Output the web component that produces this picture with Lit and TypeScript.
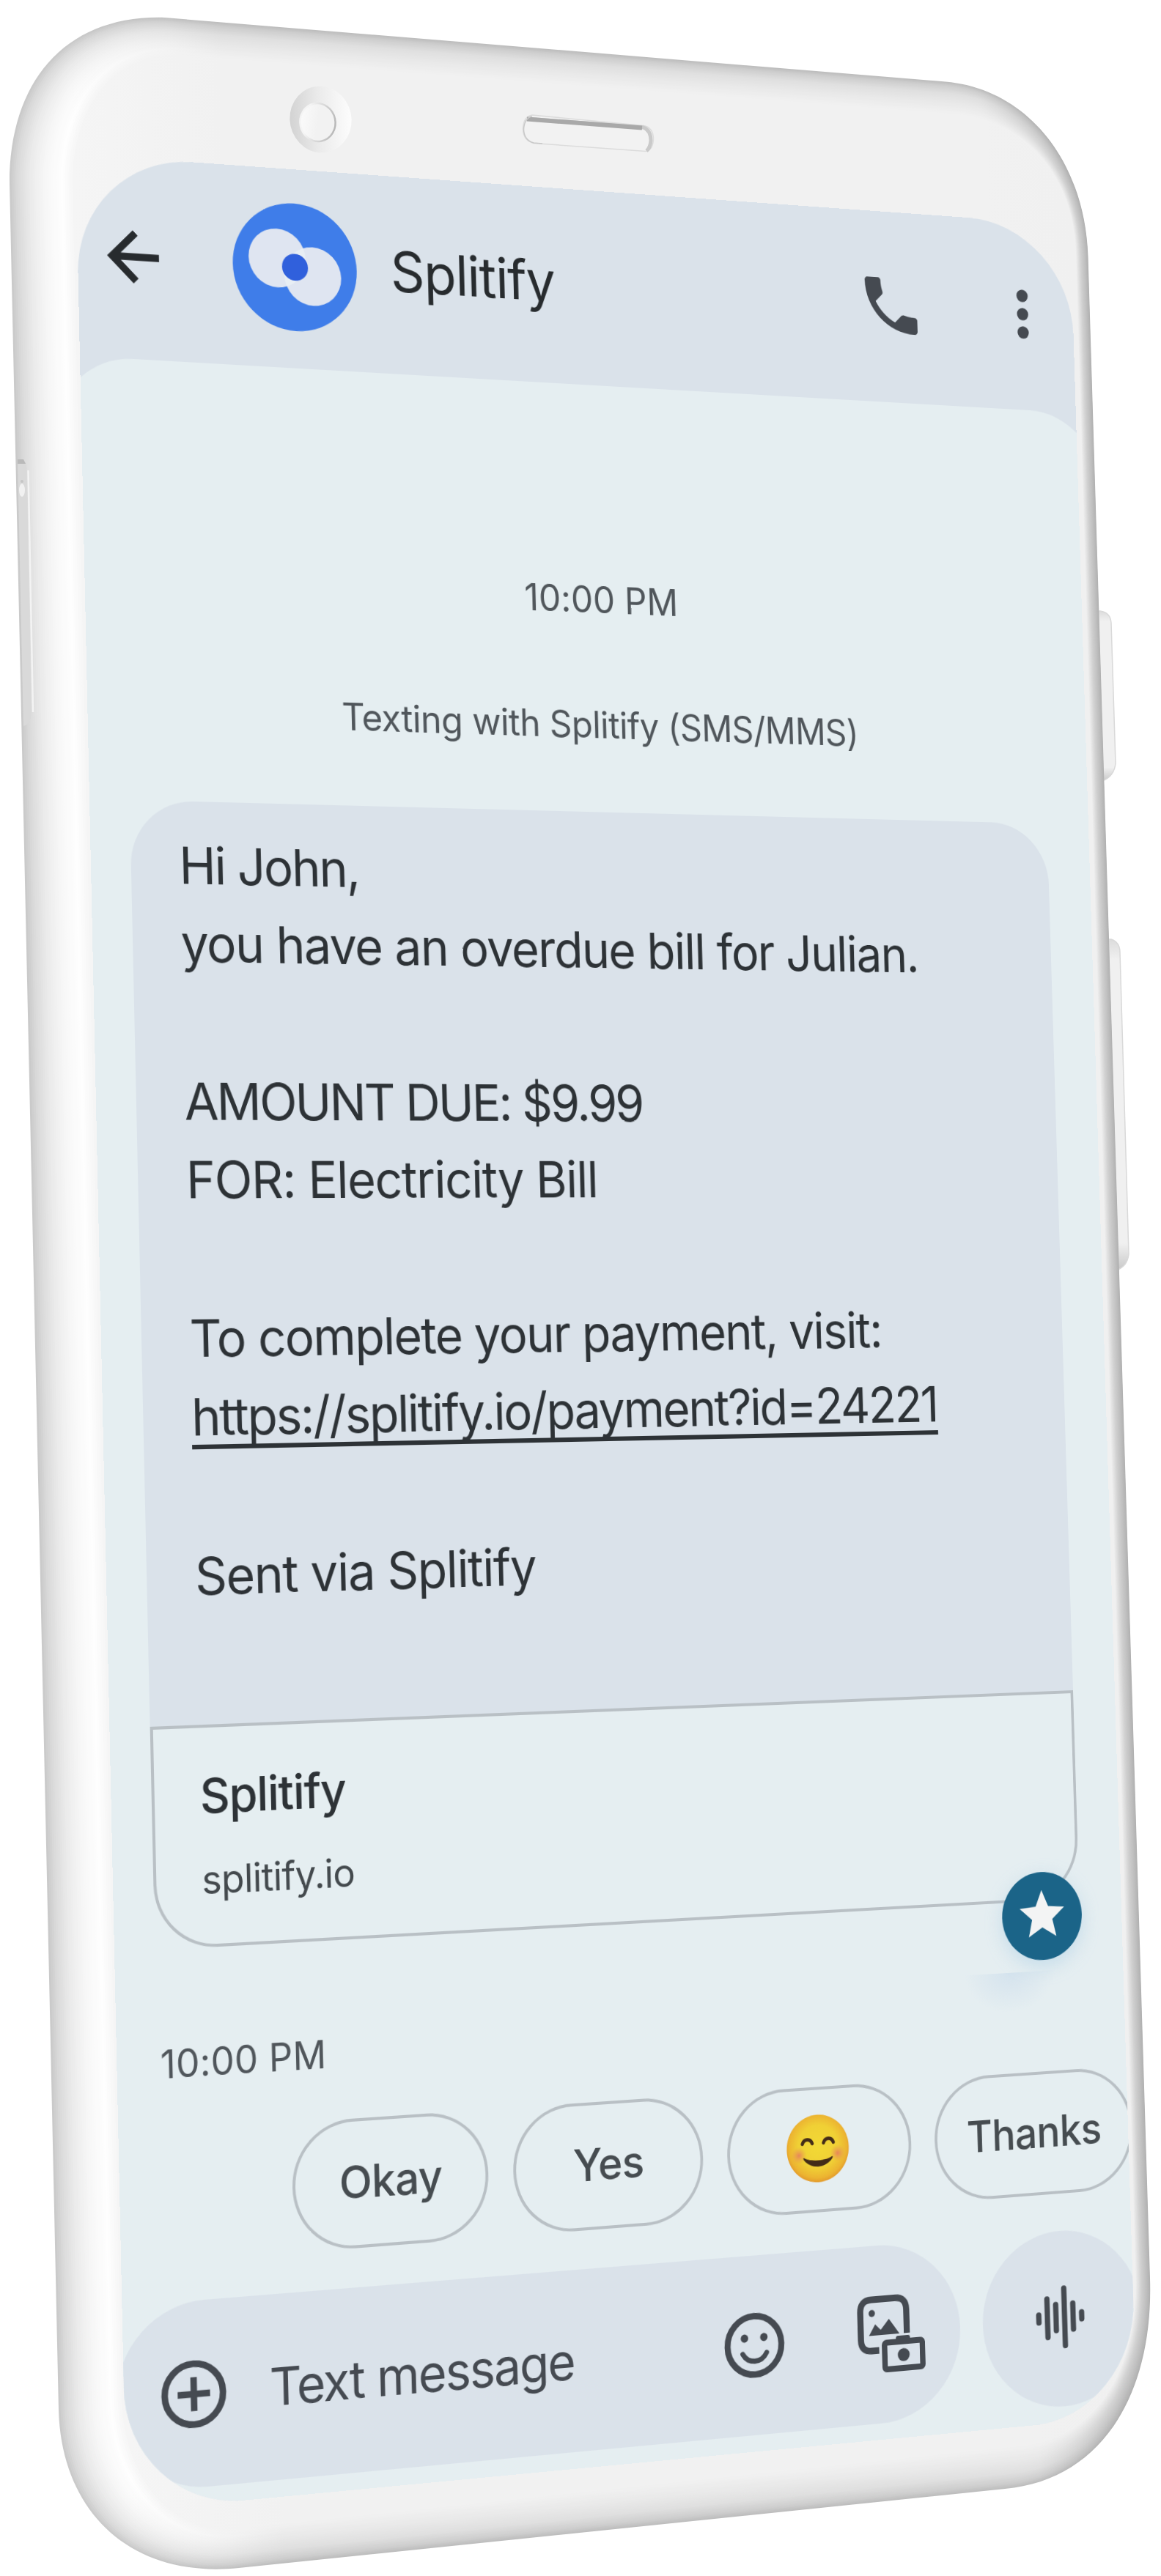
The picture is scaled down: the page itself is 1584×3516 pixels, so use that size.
import { LitElement, html, svg, css } from "lit";
import { customElement, property } from "lit/decorators.js";

type Point = [number, number];

/** Size of the flat, untilted phone screen. */
const SCREEN_W = 1440;
const SCREEN_H = 3068;

/** Where the four corners of the screen land once the phone is tilted. */
const SCREEN_CORNERS: [Point, Point, Point, Point] = [
  [103, 210],
  [1460, 307],
  [1551, 3297],
  [172.5, 3428],
];

/** Projective transform that maps a w x h rectangle onto a quadrilateral (TL, TR, BR, BL). */
function quadMatrix(w: number, h: number, [p0, p1, p2, p3]: [Point, Point, Point, Point]): string {
  const dx1 = p1[0] - p2[0];
  const dx2 = p3[0] - p2[0];
  const dx3 = p0[0] - p1[0] + p2[0] - p3[0];
  const dy1 = p1[1] - p2[1];
  const dy2 = p3[1] - p2[1];
  const dy3 = p0[1] - p1[1] + p2[1] - p3[1];
  const det = dx1 * dy2 - dx2 * dy1;
  const g = (dx3 * dy2 - dx2 * dy3) / det;
  const k = (dx1 * dy3 - dx3 * dy1) / det;
  const a = p1[0] - p0[0] + g * p1[0];
  const b = p3[0] - p0[0] + k * p3[0];
  const d = p1[1] - p0[1] + g * p1[1];
  const e = p3[1] - p0[1] + k * p3[1];
  const m = [a / w, d / w, 0, g / w, b / h, e / h, 0, k / h, 0, 0, 1, 0, p0[0], p0[1], 0, 1];
  return `matrix3d(${m.map((n) => n.toFixed(10)).join(",")})`;
}

/* ---- Phone body: rings interpolated between the silhouette and the front face ---- */

const OUTER = [
  13, 250, 13, 110, 90, 20, 225, 24, 1290, 111.5, 1400, 121, 1480, 218, 1484.5, 350, 1569, 3110,
  1574, 3268, 1503, 3385, 1371, 3397, 326, 3505, 180, 3520, 84, 3430, 80, 3290,
];
const INNER = [
  99, 250, 99, 150, 150, 72, 245, 75, 1300, 155, 1400, 163, 1465, 240, 1468, 345, 1549.5, 3110,
  1552, 3230, 1500, 3325, 1400, 3338, 320, 3452, 225, 3460, 166, 3370, 166, 3270,
];

function bodyPath(t: number): string {
  const p = OUTER.map((v, i) => (v + (INNER[i] - v) * t).toFixed(1));
  const c = (i: number) => `C${p.slice(i, i + 6).join(" ")}`;
  return `M${p[0]} ${p[1]}${c(2)}L${p[8]} ${p[9]}${c(10)}L${p[16]} ${p[17]}${c(18)}L${p[24]} ${p[25]}${c(26)}Z`;
}

type Ramp = [number, number][];
const LEFT_RAMP: Ramp = [[0, 202], [0.1, 217], [0.3, 234], [0.55, 247], [0.82, 254], [1, 245]];
const MID_RAMP: Ramp = [[0, 190], [0.12, 206], [0.35, 223], [0.7, 234], [1, 241]];
const RIGHT_RAMP: Ramp = [[0, 176], [0.2, 188], [0.6, 208], [0.9, 231], [1, 240]];

function grey(ramp: Ramp, t: number): string {
  let i = 1;
  while (i < ramp.length - 1 && ramp[i][0] < t) i++;
  const [t0, v0] = ramp[i - 1];
  const [t1, v1] = ramp[i];
  const v = Math.round(v0 + ((v1 - v0) * (t - t0)) / (t1 - t0));
  return `rgb(${v},${v},${v})`;
}

const RINGS = Array.from({ length: 33 }, (_, i) => i / 32);

@customElement("phone-body")
class PhoneBody extends LitElement {
  static styles = css`
    :host {
      display: block;
      width: 1584px;
      height: 3516px;
    }
    .body {
      display: block;
    }
  `;

  render() {
    return html`
      <svg class="body" width="1584" height="3516" viewBox="0 0 1584 3516">
        <defs>
          ${RINGS.map(
            (t, i) => svg`
              <linearGradient id="ring${i}" gradientUnits="userSpaceOnUse" x1="18" y1="500" x2="1494" y2="463">
                <stop offset="0" stop-color=${grey(LEFT_RAMP, t)} />
                <stop offset=".06" stop-color=${grey(LEFT_RAMP, t)} />
                <stop offset=".2" stop-color=${grey(MID_RAMP, t)} />
                <stop offset=".9" stop-color=${grey(MID_RAMP, t)} />
                <stop offset=".98" stop-color=${grey(RIGHT_RAMP, t)} />
              </linearGradient>`
          )}
          <linearGradient id="lensRim" x1="0" y1=".4" x2="1" y2=".6">
            <stop offset="0" stop-color="#d2d2d2" />
            <stop offset=".45" stop-color="#eaeaea" />
            <stop offset="1" stop-color="#fdfdfd" />
          </linearGradient>
          <linearGradient id="lens" x1="0" y1=".3" x2="1" y2=".7">
            <stop offset="0" stop-color="#fbfbfb" />
            <stop offset=".5" stop-color="#f2f2f2" />
          </linearGradient>
          <linearGradient id="lensEdge" x1="0" y1=".3" x2="1" y2=".8">
            <stop offset=".2" stop-color="#f4f4f4" />
            <stop offset="1" stop-color="#b2b2b2" />
          </linearGradient>
          <linearGradient id="key" x1="0" y1="0" x2="0" y2="1">
            <stop offset="0" stop-color="#dcdcdc" />
            <stop offset=".06" stop-color="#f0f0f0" />
            <stop offset=".92" stop-color="#f0f0f0" />
            <stop offset="1" stop-color="#c9c9c9" />
          </linearGradient>
        </defs>

        <g fill="url(#key)" stroke="#d9d9d9" stroke-width="1.5">
          <path d="M1490 834H1501Q1515 836 1516 850L1522 1042Q1520 1060 1504 1066H1490Z" />
          <path d="M1500 1282H1516Q1528 1286 1528 1300L1540 1712Q1538 1728 1525 1733H1500Z" />
        </g>

        ${RINGS.map((t, i) => svg`<path d=${bodyPath(t)} fill="url(#ring${i})" />`)}

        <path d="M24 628H31Q36 629 36.500 640L43 970Q43 982 37 989L32 991Z" fill="#d9d9d9" />
        <path d="M38.500 642L45 972" stroke="#f3f3f3" stroke-width="2.500" fill="none" />
        <path d="M24 627H32L35 633H24Z" fill="#b9b9b9" />
        <ellipse cx="30" cy="657" rx="2" ry="2" fill="#c6c6c6" />
        <ellipse cx="30" cy="669" rx="4" ry="9" fill="#f1f1f1" />

        <ellipse cx="437.500" cy="163" rx="42" ry="45.500" transform="rotate(-12 437.500 163)" fill="url(#lensRim)" />
        <ellipse cx="433.500" cy="167" rx="24" ry="26" transform="rotate(-12 433.500 167)" fill="url(#lens)" stroke="url(#lensEdge)" stroke-width="2.500" />

        <path d="M726 157L878 171.500Q891 174 891.500 189Q891 205 881 206.500L728 195.500Q714 192 713.500 176Q714 159 726 157Z" fill="#f2f2f2" stroke="#dcdcdc" stroke-width="1.500" />
        <path d="M719 162L878 174Q888 178 888 192Q887 202 882 206" fill="none" stroke="#cacaca" stroke-width="5" />
        <path d="M719 162.500L876 174.500" fill="none" stroke="#a9a9a9" stroke-width="6" />
        <path d="M726 158.500Q715 162 714.500 177Q715 191 728 195L740 196" fill="none" stroke="#c9c9c9" stroke-width="1.500" />
      </svg>
    `;
  }
}

/* ---- Icons ---- */

@customElement("chat-icon")
class ChatIcon extends LitElement {
  static styles = css`
    :host {
      display: block;
      flex: none;
      width: 104px;
      height: 104px;
    }
    .glyph {
      display: block;
      width: 100%;
      height: 100%;
      fill: currentColor;
      overflow: visible;
    }
  `;

  @property() name = "";

  private shape() {
    switch (this.name) {
      case "back":
        return svg`<path d="M20 11H7.830l5.590-5.590L12 4l-8 8 8 8 1.410-1.410L7.830 13H20z" stroke="currentColor" stroke-width=".2" />`;
      case "call":
        return svg`<path d="M6.620 10.790c1.440 2.830 3.760 5.140 6.590 6.590l2.200-2.200c.27-.27.67-.36 1.020-.24 1.120.37 2.330.57 3.570.57.55 0 1 .45 1 1V20c0 .55-.45 1-1 1-9.390 0-17-7.610-17-17 0-.55.45-1 1-1h3.500c.55 0 1 .45 1 1 0 1.250.2 2.450.57 3.570.11.35.03.74-.25 1.020l-2.200 2.200z" />`;
      case "more":
        return svg`<circle cx="12" cy="6" r="2" /><circle cx="12" cy="12" r="2" /><circle cx="12" cy="18" r="2" />`;
      case "add":
        return svg`<g fill="none" stroke="currentColor" stroke-width="2"><circle cx="12" cy="12" r="9" /><path d="M12 7V17M7 12H17" /></g>`;
      case "emoji":
        return svg`
          <g fill="none" stroke="currentColor">
            <circle cx="12" cy="12" r="9" stroke-width="2" />
            <path d="M8 14.500C8.900 16.100 10.300 16.900 12 16.900S15.100 16.100 16 14.500" stroke-width="1.600" stroke-linecap="round" />
          </g>
          <circle cx="8.700" cy="9.700" r="1.250" /><circle cx="15.200" cy="9.700" r="1.250" />`;
    }
    return svg``;
  }

  render() {
    return html`<svg class="glyph" viewBox="0 0 24 24">${this.shape()}</svg>`;
  }
}

const mediaIcon = html`
  <svg class="media" viewBox="0 0 99 104" fill="none" stroke="currentColor">
    <path d="M72.500 53V21Q72.500 4.500 56 4.500H21Q4.500 4.500 4.500 21V58Q4.500 73.500 20 73.500H31" stroke-width="9" />
    <path d="M16.500 53L26 38L34 46L46.500 32L61.500 53Z" fill="currentColor" stroke="none" />
    <circle cx="21.500" cy="23" r="4.700" fill="currentColor" stroke="none" />
    <rect x="39" y="64" width="56" height="36" rx="3" stroke-width="8" />
    <path d="M56 64V59.500Q56 56 59 56H74Q77 56 77 59.500V64Z" fill="currentColor" stroke="none" />
    <circle cx="67" cy="82" r="8.800" fill="currentColor" stroke="none" />
  </svg>
`;

const WAVE = [18, 60, 43, 86, 43, 17];
const waveIcon = html`
  <svg class="wave" viewBox="0 0 74 88" fill="currentColor">
    ${WAVE.map((h, i) => svg`<rect x=${0.5 + i * 13} y=${44 - h / 2} width="8" height=${h} rx="4" />`)}
  </svg>
`;

const avatar = html`
  <svg class="avatar" viewBox="-87 -87 174 174">
    <clipPath id="leftDisc"><circle cx="-24.500" cy="-11" r="39.500" /></clipPath>
    <circle r="86" fill="#3f7de9" />
    <circle cx="-24.500" cy="-11" r="39.500" fill="#dfe5f1" />
    <circle cx="24.500" cy="11" r="39.500" fill="#dfe5f1" />
    <circle cx="24.500" cy="11" r="39.500" fill="#e8eef4" clip-path="url(#leftDisc)" />
    <circle r="18" fill="#3060dc" />
  </svg>
`;

const smile = html`
  <svg class="smile" viewBox="-46 -46 92 92">
    <defs>
      <radialGradient id="face" cx=".5" cy=".47" r=".53">
        <stop offset="0" stop-color="#f2d935" />
        <stop offset=".6" stop-color="#f0d035" />
        <stop offset=".88" stop-color="#ecb431" />
        <stop offset="1" stop-color="#e39a2c" />
      </radialGradient>
      <radialGradient id="cheek">
        <stop offset="0" stop-color="#e8855b" />
        <stop offset="1" stop-color="#e8a04a" stop-opacity="0" />
      </radialGradient>
    </defs>
    <circle r="45.500" fill="url(#face)" />
    <circle cx="-28" cy="8" r="11.500" fill="url(#cheek)" />
    <circle cx="29" cy="8" r="11.500" fill="url(#cheek)" />
    <g fill="none" stroke="#432c18" stroke-width="4.600" stroke-linecap="round">
      <path d="M-22.500 -7C-20 -14.500 -10.500 -14.500 -8 -7" />
      <path d="M8.500 -7C11 -14.500 20.500 -14.500 23 -7" />
    </g>
    <path d="M-21 11.500C-12 17.500 12 17.500 21 11.500C24 13 14 24.500 0 24.500S-24 13 -21 11.500Z" fill="#432c18" />
  </svg>
`;

/* ---- Conversation ---- */

interface Line {
  text: string;
  /** Letter spacing of the line, in pixels. */
  tracking?: number;
  link?: boolean;
}

const MESSAGE: Line[] = [
  { text: "Hi John,", tracking: -2.1 },
  { text: "you have an overdue bill for Julian.", tracking: -1.52 },
  { text: "" },
  { text: "AMOUNT DUE: $9.99", tracking: -2.7 },
  { text: "FOR: Electricity Bill", tracking: -1.35 },
  { text: "" },
  { text: "To complete your payment, visit:", tracking: -1.7 },
  { text: "https://splitify.io/payment?id=24221", tracking: -2.22, link: true },
  { text: "" },
  { text: "Sent via Splitify", tracking: -1.3 },
];

@customElement("chat-screen")
class ChatScreen extends LitElement {
  static styles = css`
    :host {
      display: flex;
      flex-direction: column;
      width: 1440px;
      height: 3068px;
      overflow: hidden;
      border-radius: 158px;
      background: #dae2ea;
      color: #2d3236;
      font-family: Inter, Roboto, "Liberation Sans", sans-serif;
    }
    .header {
      flex: none;
      display: flex;
      align-items: center;
      box-sizing: border-box;
      height: 268px;
      padding: 0 26px 5px 23px;
      color: #454a51;
    }
    .back {
      color: #272b2e;
    }
    .avatar {
      flex: none;
      width: 174px;
      height: 174px;
      margin-left: 82.500px;
    }
    .name {
      flex: 1;
      margin-left: 47px;
      padding-bottom: 5px;
      font-size: 75px;
      line-height: 90px;
      letter-spacing: -1.2px;
      color: #272b2e;
    }
    .more {
      margin-left: 97px;
    }
    .sheet {
      flex: 1;
      display: flex;
      flex-direction: column;
      margin: 0 -33px;
      padding: 264px 33px 0;
      border-radius: 105px 105px 0 0;
      background: #e5eef1;
    }
    .note {
      font-size: 50px;
      line-height: 60px;
      letter-spacing: -0.55px;
      text-align: center;
      color: #50565b;
    }
    .time {
      font-size: 50.5px;
      letter-spacing: -0.1px;
    }
    .status {
      margin-top: 111px;
    }
    .card {
      position: relative;
      width: 1322px;
      margin: 88.500px 0 0 54px;
    }
    .bubble {
      box-sizing: border-box;
      height: 1211px;
      padding: 33px 64px 0 65px;
      border-radius: 86px 86px 0 0;
      background: #dae2ea;
      font-size: 67.5px;
      line-height: 103.7px;
      white-space: nowrap;
    }
    .line {
      height: 103.7px;
    }
    .link {
      text-decoration: underline;
      text-decoration-thickness: 5.5px;
      text-underline-offset: 11.5px;
      text-decoration-skip-ink: none;
    }
    .preview {
      display: flex;
      flex-direction: column;
      gap: 41px;
      box-sizing: border-box;
      height: 289px;
      padding: 50px 61px 0;
      border: 4px solid #b9c0c5;
      border-radius: 0 0 84px 84px;
    }
    .site {
      font-size: 62.5px;
      font-weight: 500;
      line-height: 76px;
      letter-spacing: -1.1px;
    }
    .domain {
      font-size: 51px;
      line-height: 62px;
      letter-spacing: -0.6px;
      color: #43494d;
    }
    .badge {
      position: absolute;
      right: -3px;
      bottom: -81px;
      display: grid;
      place-items: center;
      width: 121px;
      height: 121px;
      border-radius: 50%;
      background: #1b6488;
      box-shadow: 0 8px 26px rgba(150, 195, 225, 0.4);
    }
    .star {
      width: 81px;
      height: 81px;
      margin-top: -3px;
      fill: #f3f4f4;
    }
    .glow {
      position: absolute;
      right: 40px;
      bottom: -150px;
      width: 138px;
      height: 54px;
      background: radial-gradient(ellipse 50% 100% at 50% 0, rgba(196, 216, 234, 0.5), rgba(214, 228, 242, 0));
    }
    .sent {
      margin: 118px 0 0 58px;
      letter-spacing: 0.2px;
      text-align: left;
    }
    .replies {
      display: flex;
      gap: 35.500px;
      margin: 56px 0 0 232px;
    }
    .chip {
      flex: none;
      display: grid;
      place-items: center;
      box-sizing: border-box;
      width: 269.500px;
      height: 169px;
      padding-bottom: 3px;
      border: 4.2px solid #b9c0c5;
      border-radius: 84px;
      font-size: 59px;
      font-weight: 500;
      letter-spacing: -0.7px;
      color: #464c50;
    }
    .wide {
      width: 300px;
    }
    .smile {
      width: 92px;
      height: 92px;
      margin-right: 5px;
    }
    .composer {
      display: flex;
      gap: 34px;
      margin: 51.500px 0 0 -10px;
      color: #454a51;
    }
    .field {
      flex: none;
      display: flex;
      align-items: center;
      box-sizing: border-box;
      width: 1187px;
      height: 240px;
      padding: 0 53.500px 0 51px;
      border-radius: 120px;
      background: #dae2ea;
    }
    .placeholder {
      flex: 1;
      margin-left: 50px;
      font-size: 67.5px;
      line-height: 80px;
      letter-spacing: -1.9px;
    }
    .media {
      width: 99px;
      height: 104px;
      margin-left: 99px;
    }
    .voice {
      flex: none;
      display: grid;
      place-items: center;
      width: 240px;
      height: 240px;
      border-radius: 50%;
      background: #dae2ea;
    }
    .wave {
      width: 74px;
      height: 88px;
      margin: 0 7px 4px 0;
    }
  `;

  private line(l: Line) {
    const text = l.link ? html`<span class="link">${l.text}</span>` : l.text;
    return html`<div class="line" style="letter-spacing: ${l.tracking ?? 0}px">${text}</div>`;
  }

  render() {
    return html`
      <div class="header">
        <chat-icon class="back" name="back"></chat-icon>
        ${avatar}
        <div class="name">Splitify</div>
        <chat-icon name="call"></chat-icon>
        <chat-icon class="more" name="more"></chat-icon>
      </div>
      <div class="sheet">
        <div class="note time">10:00 PM</div>
        <div class="note status">Texting with Splitify (SMS/MMS)</div>
        <div class="card">
          <div class="bubble">${MESSAGE.map((l) => this.line(l))}</div>
          <div class="preview">
            <div class="site">Splitify</div>
            <div class="domain">splitify.io</div>
          </div>
          <div class="glow"></div>
          <div class="badge">
            <svg class="star" viewBox="0 0 24 24">
              <path d="M12 17.270L18.180 21l-1.640-7.030L22 9.240l-7.190-.61L12 2 9.190 8.630 2 9.240l5.460 4.730L5.820 21z" />
            </svg>
          </div>
        </div>
        <div class="note time sent">10:00 PM</div>
        <div class="replies">
          <div class="chip">Okay</div>
          <div class="chip">Yes</div>
          <div class="chip">${smile}</div>
          <div class="chip wide">Thanks</div>
        </div>
        <div class="composer">
          <div class="field">
            <chat-icon name="add"></chat-icon>
            <div class="placeholder">Text message</div>
            <chat-icon name="emoji"></chat-icon>
            ${mediaIcon}
          </div>
          <div class="voice">${waveIcon}</div>
        </div>
      </div>
    `;
  }
}

@customElement("app-root")
class AppRoot extends LitElement {
  static styles = css`
    :host {
      display: grid;
      width: 1584px;
      height: 3516px;
      overflow: hidden;
      background: #fff;
    }
    .phone,
    .tilted {
      grid-area: 1 / 1;
    }
    .tilted {
      width: 1440px;
      height: 3068px;
      transform-origin: 0 0;
    }
  `;

  render() {
    return html`
      <phone-body class="phone"></phone-body>
      <div class="tilted" style="transform: ${quadMatrix(SCREEN_W, SCREEN_H, SCREEN_CORNERS)}">
        <chat-screen></chat-screen>
      </div>
    `;
  }
}
